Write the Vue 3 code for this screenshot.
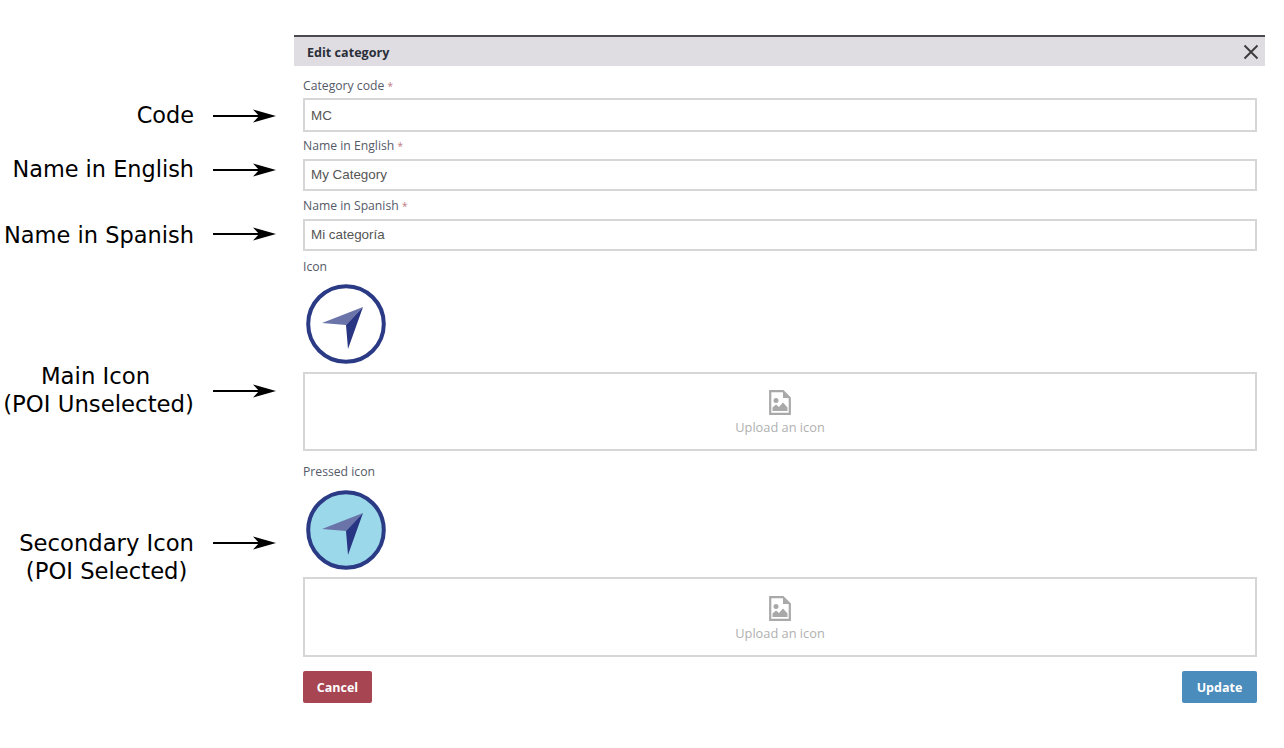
<script setup>
const arrowRows = [116, 170, 234, 391, 543]
const fields = [
  { id: 'code', label: 'Category code', value: 'MC', cls: 'f1' },
  { id: 'en', label: 'Name in English', value: 'My Category', cls: 'f2' },
  { id: 'es', label: 'Name in Spanish', value: 'Mi categoría', cls: 'f3' }
]
const icons = [
  { label: 'Icon', fill: '#ffffff', cls: 'b1' },
  { label: 'Pressed icon', fill: '#9bd8ea', cls: 'b2' }
]
</script>

<template>
  <div class="page">
    <div class="notes">
      <div class="note n1">Code</div>
      <div class="note n2">Name in English</div>
      <div class="note n3">Name in Spanish</div>
      <div class="note n4"><span class="first">Main Icon</span>(POI Unselected)</div>
      <div class="note n5">Secondary Icon<br />(POI Selected)</div>
      <svg v-for="y in arrowRows" :key="y" class="arrow" :style="{ top: y - 8 + 'px' }" width="64" height="16" viewBox="0 0 64 16">
        <path d="M0 8H50" stroke="#000" stroke-width="2" />
        <path d="M40 1.5 L63 8 L40 14.5 L46 8 Z" fill="#000" />
      </svg>
    </div>

    <section class="dialog">
      <header class="head">
        <span class="title">Edit category</span>
        <svg class="close" width="16" height="16" viewBox="0 0 16 16">
          <path d="M1.5 1.5 L14.5 14.5 M14.5 1.5 L1.5 14.5" stroke="#3c3c3c" stroke-width="1.9" fill="none" />
        </svg>
      </header>
      <div class="body">
        <div v-for="f in fields" :key="f.id" class="field" :class="f.cls">
          <label class="lab">{{ f.label }} <span class="req">*</span></label>
          <input class="inp" :value="f.value" readonly />
        </div>
        <div v-for="ic in icons" :key="ic.label" class="iconblock" :class="ic.cls">
          <div class="lab">{{ ic.label }}</div>
          <svg class="poi" width="80" height="80" viewBox="0 0 80 80">
            <circle cx="40" cy="40" r="37.8" :fill="ic.fill" stroke="#2b3a85" stroke-width="4" />
            <path d="M16 39 L57 23 L40 41 Z" fill="#6a74a8" />
            <path d="M57 23 L40 41 L42 65 Z" fill="#283583" />
          </svg>
          <div class="drop">
            <svg width="22" height="25" viewBox="0 0 22 25">
              <path d="M1.2 1.2 H14 L20.8 8 V23.8 H1.2 Z" fill="#fff" stroke="#a9a9a9" stroke-width="2.2" />
              <path d="M14 1.5 V8 H20.5 Z" fill="#a9a9a9" />
              <circle cx="7" cy="10.5" r="2.5" fill="#a9a9a9" />
              <path d="M3.5 21 V17.5 L7 14.5 L10 17 L14 12.5 L18.5 17.5 V21 Z" fill="#a9a9a9" />
            </svg>
            <span class="up">Upload an icon</span>
          </div>
        </div>
        <div class="actions">
          <button class="btn cancel">Cancel</button>
          <button class="btn update">Update</button>
        </div>
      </div>
    </section>
  </div>
</template>

<style>
html, body { margin: 0; background: #fff; }
</style>

<style scoped>
.page {
  position: relative;
  width: 1284px;
  height: 748px;
  box-sizing: border-box;
  padding: 35px 19px 0 293px;
  overflow: hidden;
  font-family: "Open Sans", "Liberation Sans", sans-serif;
}
.notes { position: absolute; inset: 0; }
.note {
  position: absolute;
  right: 1090px;
  font-family: "DejaVu Sans", sans-serif;
  font-size: 22.4px;
  line-height: 28px;
  color: #000;
  text-align: center;
  white-space: nowrap;
}
.first { display: block; margin-right: 6px; }
.n1 { top: 101px; }
.n2 { top: 155px; }
.n3 { top: 221px; font-size: 22.5px; }
.n4 { top: 362px; font-size: 22.8px; }
.n5 { top: 529px; font-size: 22.7px; }
.arrow { position: absolute; left: 213px; }
.dialog { border-top: 2px solid #4a4a50; margin-left: 1px; }
.head {
  height: 29px;
  background: #dfdde1;
  display: flex;
  align-items: center;
  justify-content: space-between;
  padding: 0 6px 0 13px;
}
.title { font-size: 12.6px; font-weight: 700; color: #2a2f3a; padding-top: 1px; }
.close { display: block; }
.body { padding: 11px 8px 0 9px; }
.lab {
  display: block;
  font-size: 12.2px;
  line-height: 18px;
  color: #555a68;
}
.req { color: #c07a82; font-size: 10px; }
.field { margin-bottom: 5px; }
.f1 .inp { height: 34px; margin-top: 3px; padding-bottom: 0; }
.f2 { margin-bottom: 6px; }
.inp {
  display: block;
  width: 100%;
  height: 32px;
  box-sizing: border-box;
  margin-top: 4px;
  padding: 0 6px 2px;
  border: 2px solid #d6d6d6;
  background: #fff;
  font-family: "Liberation Sans", sans-serif;
  font-size: 13.4px;
  color: #555;
  outline: none;
}
.b1 { padding-top: 2px; margin-bottom: 12px; }
.b2 { margin-bottom: 14px; }
.poi { display: block; margin: 8px 0 8px 3px; }
.b2 .poi { margin: 9px 0 7px 3px; }
.drop {
  height: 80px;
  box-sizing: border-box;
  border: 2px solid #d6d6d6;
  display: flex;
  flex-direction: column;
  align-items: center;
  justify-content: center;
  gap: 3px;
  padding-top: 3px;
}
.b1 .drop { height: 79px; }
.up { font-size: 12.8px; line-height: 18px; color: #b0b0b0; }
.actions { display: flex; justify-content: space-between; }
.btn {
  height: 32px;
  border: none;
  border-radius: 2px;
  color: #fff;
  font-family: "Open Sans", sans-serif;
  font-size: 12.5px;
  font-weight: 700;
  padding: 0;
}
.cancel { width: 69px; background: #a84552; }
.update { width: 75px; background: #4a8cbb; }
</style>
